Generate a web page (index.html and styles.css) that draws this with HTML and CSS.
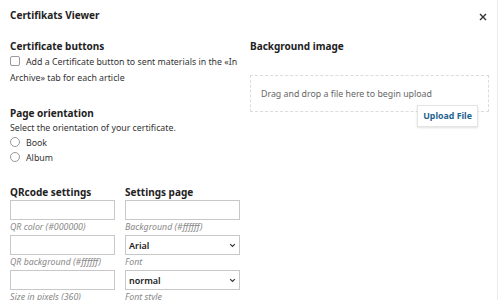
FILE: index.html
```html
<!DOCTYPE html>
<html>
<head>
<meta charset="utf-8">
<link rel="stylesheet" href="styles.css">
</head>
<body>
<div class="dialog">
  <header class="head">
    <h1 class="title">Certifikats Viewer</h1>
    <svg class="close" width="8" height="8" viewBox="0 0 8 8"><path d="M1 1 L7 7 M7 1 L1 7" stroke="#333" stroke-width="1.4"/></svg>
  </header>
  <div class="body">
    <div class="left">
      <section class="group">
        <h2 class="heading">Certificate buttons</h2>
        <label class="check"><span class="box"></span>Add a Certificate button to sent materials in the «In Archive» tab for each article</label>
      </section>
      <section class="group orient">
        <h2 class="heading">Page orientation</h2>
        <p class="desc">Select the orientation of your certificate.</p>
        <label class="radio"><span class="circle"></span>Book</label>
        <label class="radio"><span class="circle"></span>Album</label>
      </section>
      <div class="cols">
        <div class="col">
          <h2 class="heading">QRcode settings</h2>
          <div class="field"><span class="input"></span><span class="hint">QR color (#000000)</span></div>
          <div class="field"><span class="input"></span><span class="hint">QR background (#ffffff)</span></div>
          <div class="field"><span class="input"></span><span class="hint">Size in pixels (360)</span></div>
        </div>
        <div class="col wide">
          <h2 class="heading">Settings page</h2>
          <div class="field"><span class="input"></span><span class="hint">Background (#ffffff)</span></div>
          <div class="field"><span class="input select">Arial<svg class="chev" width="7" height="5" viewBox="0 0 7 5"><path d="M1.2 1.2 L3.5 3.5 L5.8 1.2" fill="none" stroke="#333" stroke-width="1.2"/></svg></span><span class="hint">Font</span></div>
          <div class="field"><span class="input select">normal<svg class="chev" width="7" height="5" viewBox="0 0 7 5"><path d="M1.2 1.2 L3.5 3.5 L5.8 1.2" fill="none" stroke="#333" stroke-width="1.2"/></svg></span><span class="hint">Font style</span></div>
        </div>
      </div>
    </div>
    <div class="right">
      <h2 class="heading">Background image</h2>
      <div class="drop">Drag and drop a file here to begin upload</div>
      <div class="upload-row"><span class="upload">Upload File</span></div>
    </div>
  </div>
</div>
</body>
</html>
```
FILE: styles.css
```css
html, body {
  margin: 0;
  padding: 0;
  background: #fff;
}
body {
  font-family: "Noto Sans", "Open Sans", sans-serif;
  color: #333;
  width: 500px;
  height: 300px;
  overflow: hidden;
}
.dialog {
  width: 498px;
  height: 300px;
  border-right: 1px solid #ececec;
  box-sizing: border-box;
}
.head {
  display: flex;
  justify-content: space-between;
  align-items: center;
  height: 30px;
  padding: 0 10px 0 10px;
  box-sizing: border-box;
}
.title {
  margin: 0;
  font-size: 10px;
  font-weight: 700;
  color: #222;
}
.close {
  margin-top: 4px;
}
.body {
  display: flex;
  padding: 8px 0 0 10px;
  gap: 10px;
}
.left {
  width: 230px;
}
.right {
  width: 239px;
}
.heading {
  margin: 0;
  font-size: 10px;
  font-weight: 700;
  color: #222;
  line-height: 16px;
}
.check {
  display: block;
  font-size: 8.8px;
  line-height: 16px;
  color: #333;
}
.box {
  display: inline-block;
  width: 8px;
  height: 8px;
  border: 1px solid #999;
  border-radius: 2px;
  vertical-align: -1px;
  margin-right: 6px;
}
.orient {
  margin-top: 19px;
}
.desc {
  margin: 0;
  font-size: 8.8px;
  line-height: 15px;
}
.radio {
  display: block;
  font-size: 8.8px;
  line-height: 15px;
}
.circle {
  display: inline-block;
  width: 8px;
  height: 8px;
  border: 1px solid #999;
  border-radius: 50%;
  vertical-align: -1px;
  margin-right: 6px;
}
.cols {
  display: flex;
  gap: 10px;
  margin-top: 18px;
}
.col {
  width: 105px;
}
.col.wide {
  width: 115px;
}
.field {
  display: flex;
  flex-direction: column;
}
.input {
  display: flex;
  align-items: center;
  justify-content: space-between;
  height: 20px;
  border: 1px solid #c8c8c8;
  box-sizing: border-box;
  padding: 0 3px 0 3px;
  font-size: 9px;
  color: #222;
}
.select {
  font-weight: 600;
}
.hint {
  font-style: italic;
  font-size: 8.8px;
  color: #888;
  line-height: 15px;
}
.drop {
  margin-top: 21px;
  height: 37px;
  border: 1px dashed #dcdcdc;
  box-sizing: border-box;
  display: flex;
  align-items: center;
  padding-left: 10px;
  font-size: 8.8px;
  color: #666;
}
.upload-row {
  display: flex;
  justify-content: flex-end;
  padding-right: 11px;
  margin-top: -7px;
}
.upload {
  background: #fff;
  border: 1px solid #e4e4e4;
  box-shadow: 0 1px 2px rgba(0,0,0,0.12);
  padding: 0 5px;
  height: 20px;
  line-height: 20px;
  font-size: 8.8px;
  font-weight: 700;
  color: #1f6592;
}
```
